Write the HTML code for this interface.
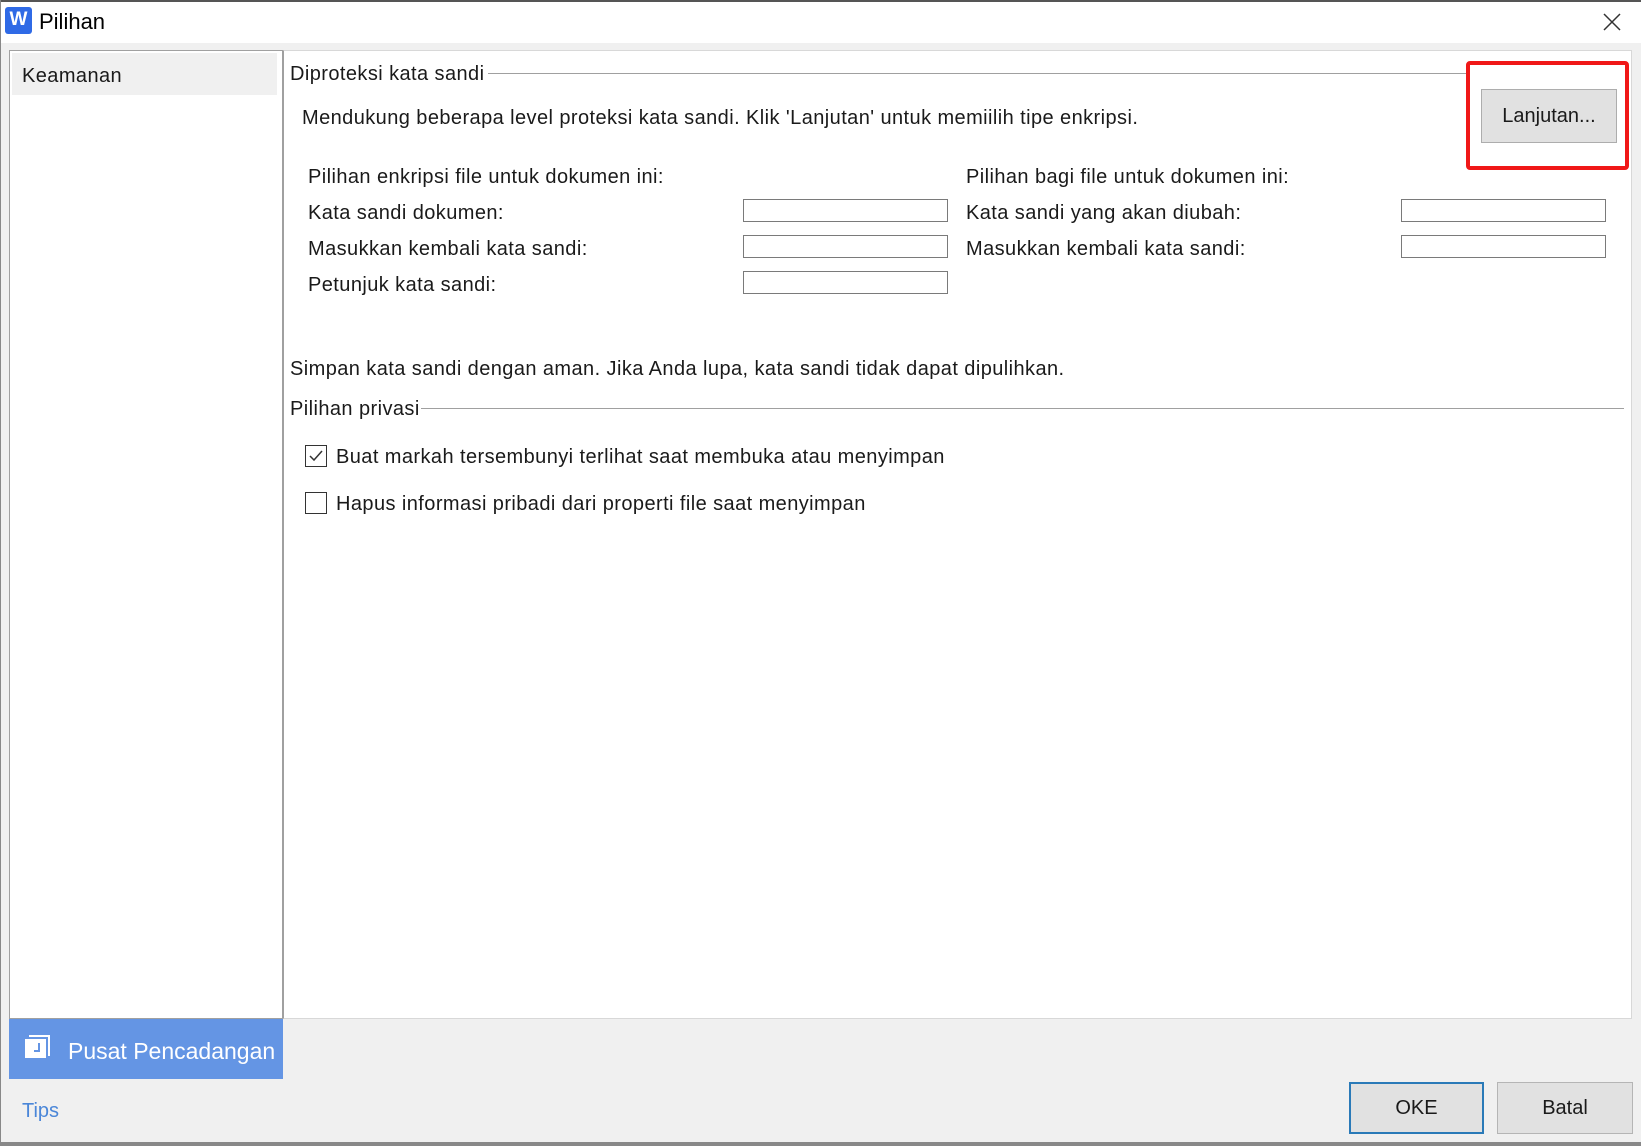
<!DOCTYPE html>
<html><head><meta charset="utf-8"><style>
*{margin:0;padding:0;box-sizing:border-box}
body{width:1641px;height:1146px;overflow:hidden;background:#f0f0f0;font-family:"Segoe UI","Liberation Sans",sans-serif;color:#1a1a1a;position:relative}
.a{position:absolute;white-space:nowrap}
.t{font-size:20px;line-height:24px;letter-spacing:0.42px}
.inp{position:absolute;height:23px;background:#fff;border:1px solid #7a7a7a}
</style></head><body>
<div class="a" style="left:0;top:0;width:1641px;height:43px;background:#fff;border-top:2px solid #555;border-left:1px solid #888"></div>
<div class="a" style="left:0;top:0;width:1px;height:1146px;background:#888"></div>
<div class="a" style="left:5px;top:7px;width:27px;height:27px;background:#2f6ae6;border-radius:3px;color:#fff;font-weight:bold;font-size:19px;line-height:25px;text-align:center">W</div>
<div class="a" style="left:39px;top:9px;font-size:22px;line-height:26px;color:#000">Pilihan</div>
<svg class="a" style="left:1603px;top:13px" width="18" height="18"><path d="M1 1L17 17M17 1L1 17" stroke="#333" stroke-width="1.5"/></svg>

<div class="a" style="left:9px;top:50px;width:274px;height:969px;background:#fff;border:1px solid #a0a0a0"></div>
<div class="a" style="left:12px;top:53px;width:265px;height:42px;background:#f0f0f0"></div>
<div class="a t" style="left:22px;top:64px">Keamanan</div>

<div class="a" style="left:283px;top:50px;width:1349px;height:969px;background:#fff;border:1px solid #d8d8d8;border-left:1px solid #a0a0a0"></div>

<div class="a t" style="left:290px;top:62px">Diproteksi kata sandi</div>
<div class="a" style="left:488px;top:73px;width:978px;height:1px;background:#a0a0a0"></div>
<div class="a t" style="left:302px;top:106px">Mendukung beberapa level proteksi kata sandi. Klik 'Lanjutan' untuk memiilih tipe enkripsi.</div>
<div class="a" style="left:1466px;top:61px;width:163px;height:109px;border:4px solid #f01818;border-radius:4px"></div>
<div class="a" style="left:1481px;top:89px;width:136px;height:54px;background:#e1e1e1;border:1px solid #adadad;font-size:20px;line-height:52px;text-align:center">Lanjutan...</div>

<div class="a t" style="left:308px;top:165px">Pilihan enkripsi file untuk dokumen ini:</div>
<div class="a t" style="left:308px;top:201px">Kata sandi dokumen:</div>
<div class="a t" style="left:308px;top:237px">Masukkan kembali kata sandi:</div>
<div class="a t" style="left:308px;top:273px">Petunjuk kata sandi:</div>
<div class="inp" style="left:743px;top:199px;width:205px"></div>
<div class="inp" style="left:743px;top:235px;width:205px"></div>
<div class="inp" style="left:743px;top:271px;width:205px"></div>
<div class="a t" style="left:966px;top:165px">Pilihan bagi file untuk dokumen ini:</div>
<div class="a t" style="left:966px;top:201px">Kata sandi yang akan diubah:</div>
<div class="a t" style="left:966px;top:237px">Masukkan kembali kata sandi:</div>
<div class="inp" style="left:1401px;top:199px;width:205px"></div>
<div class="inp" style="left:1401px;top:235px;width:205px"></div>

<div class="a t" style="left:290px;top:357px">Simpan kata sandi dengan aman. Jika Anda lupa, kata sandi tidak dapat dipulihkan.</div>
<div class="a t" style="left:290px;top:397px">Pilihan privasi</div>
<div class="a" style="left:421px;top:408px;width:1203px;height:1px;background:#a0a0a0"></div>
<div class="a" style="left:305px;top:445px;width:22px;height:22px;border:1px solid #333;background:#fff"></div>
<svg class="a" style="left:305px;top:445px" width="22" height="22"><path d="M5 11L9 15L17 6" fill="none" stroke="#333" stroke-width="1.5"/></svg>
<div class="a t" style="left:336px;top:445px">Buat markah tersembunyi terlihat saat membuka atau menyimpan</div>
<div class="a" style="left:305px;top:492px;width:22px;height:22px;border:1px solid #333;background:#fff"></div>
<div class="a t" style="left:336px;top:492px">Hapus informasi pribadi dari properti file saat menyimpan</div>

<div class="a" style="left:9px;top:1019px;width:274px;height:60px;background:#6495e4"></div>
<div class="a" style="left:29px;top:1035px;width:21px;height:21px;border:2px solid #fff;border-left:none;border-bottom:none"></div>
<div class="a" style="left:25px;top:1039px;width:21px;height:19px;background:#fff"></div>
<div class="a" style="left:34px;top:1043px;width:6px;height:9px;border-right:2px solid #6495e4;border-bottom:2px solid #6495e4"></div>
<div class="a" style="left:68px;top:1037px;font-size:23px;line-height:28px;color:#fff">Pusat Pencadangan</div>
<div class="a" style="left:22px;top:1099px;font-size:20px;line-height:24px;color:#4a86d8">Tips</div>

<div class="a" style="left:1349px;top:1082px;width:135px;height:52px;background:#e1e1e1;border:2px solid #2a7ab8;font-size:20px;line-height:48px;text-align:center">OKE</div>
<div class="a" style="left:1497px;top:1082px;width:136px;height:52px;background:#e1e1e1;border:1px solid #b5b5b5;font-size:20px;line-height:50px;text-align:center">Batal</div>
<div class="a" style="left:0;top:1142px;width:1641px;height:4px;background:#888"></div>
</body></html>
